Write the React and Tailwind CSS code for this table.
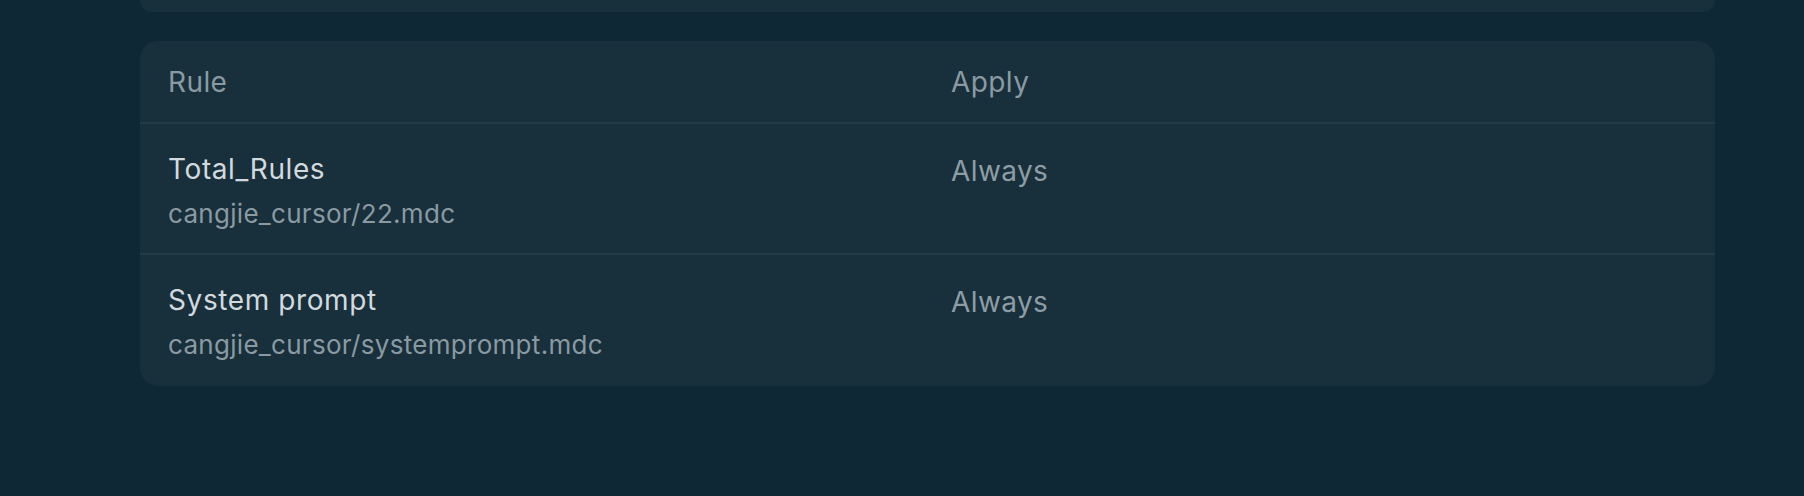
const rules = [
  { name: 'Total_Rules', path: 'cangjie_cursor/22.mdc', apply: 'Always' },
  { name: 'System prompt', path: 'cangjie_cursor/systemprompt.mdc', apply: 'Always' },
]

function App() {
  return (
    <div
      className="min-h-[496px] w-full bg-[#0e2935] pl-[140px] pr-[89px]"
      style={{ fontFamily: 'Inter, "Noto Sans", sans-serif' }}
    >
      <div className="h-[12px] rounded-b-[18px] bg-[#182f3c]" />

      <section className="mt-[29px] overflow-hidden rounded-[18px] bg-[#182f3c]">
        <div className="grid h-[83px] grid-cols-[783px_1fr] items-center border-b-2 border-[#213b47] px-[28px] text-[28px] tracking-[0.4px] text-[#8b9aa1]">
          <span>Rule</span>
          <span>Apply</span>
        </div>

        {rules.map((rule, index) => (
          <div
            key={rule.name}
            className={[
              'grid h-[131px] grid-cols-[783px_1fr] px-[28px] pt-[25px]',
              index < rules.length - 1 ? 'border-b-2 border-[#213b47]' : '',
            ].join(' ')}
          >
            <div className="min-w-0">
              <h3 className="text-[28px] leading-[40px] tracking-[0.6px] text-[#d4d9dc]">
                {rule.name}
              </h3>
              <p className="mt-[7px] text-[26px] leading-[36px] tracking-[0.3px] text-[#8b9aa1]">
                {rule.path}
              </p>
            </div>
            <div className="mt-[2px] text-[28px] leading-[40px] tracking-[0.4px] text-[#8e9da3]">
              {rule.apply}
            </div>
          </div>
        ))}
      </section>
    </div>
  )
}

export default App
